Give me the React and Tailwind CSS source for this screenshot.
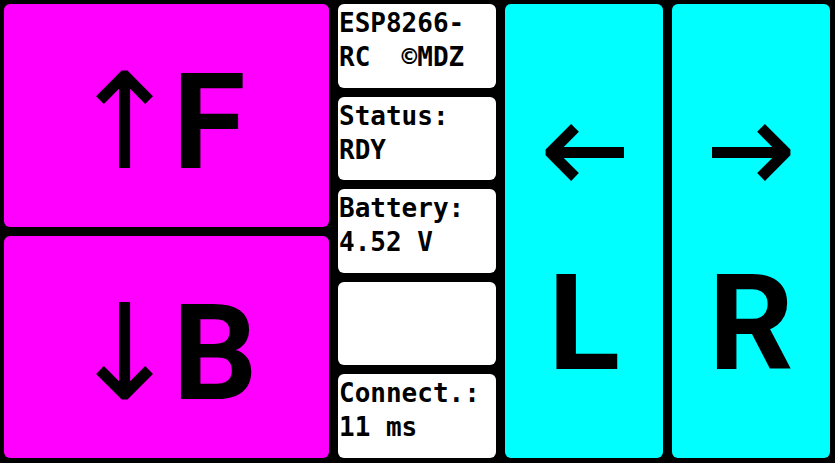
import React from "react";

function Info({ lines }) {
  return (
    <div className="flex-1 rounded-[6px] bg-white text-black font-bold text-[26px] leading-[34px] pl-[1px] pt-[2px] whitespace-pre font-['DejaVu_Sans_Mono',monospace]">
      {lines.map((l, i) => (
        <div key={i}>{l}</div>
      ))}
    </div>
  );
}

function Drive({ arrow, letter }) {
  return (
    <div className="flex-1 rounded-[6px] bg-[#ff00ff] flex items-center justify-start pl-[65px] pt-[8px] text-black text-[133px] leading-none">
      <span className="whitespace-nowrap">
        <span className="font-['DejaVu_Sans',sans-serif] font-normal mr-[-8px]">{arrow}</span>
        <span className="font-['Roboto',sans-serif] font-bold">{letter}</span>
      </span>
    </div>
  );
}

export default function App() {
  return (
    <div className="w-[835px] h-[463px] bg-black pt-[4px] pl-[4px] pb-[5px] flex gap-[9px] overflow-hidden">
      <div className="w-[325px] flex flex-col gap-[9px]">
        <Drive arrow="↑" letter="F" />
        <Drive arrow="↓" letter="B" />
      </div>
      <div className="w-[158px] flex flex-col gap-[9px]">
        <Info lines={["ESP8266-", "RC  ©MDZ"]} />
        <Info lines={["Status:", "RDY"]} />
        <Info lines={["Battery:", "4.52 V"]} />
        <Info lines={[]} />
        <Info lines={["Connect.:", "11 ms"]} />
      </div>
      <div className="w-[158px] rounded-[6px] bg-[#00ffff] flex flex-col items-center pt-[78px] gap-[42px] text-black text-[133px] leading-none">
        <div className="w-[85px] mr-[5px] overflow-hidden whitespace-nowrap font-['DejaVu_Sans',sans-serif] font-normal">←</div>
        <span className="font-['Roboto',sans-serif] font-bold">L</span>
      </div>
      <div className="w-[158px] rounded-[6px] bg-[#00ffff] flex flex-col items-center pt-[78px] gap-[42px] text-black text-[133px] leading-none">
        <div className="w-[85px] ml-[7px] flex justify-end overflow-hidden whitespace-nowrap font-['DejaVu_Sans',sans-serif] font-normal">
          <span>→</span>
        </div>
        <span className="font-['Roboto',sans-serif] font-bold">R</span>
      </div>
    </div>
  );
}
